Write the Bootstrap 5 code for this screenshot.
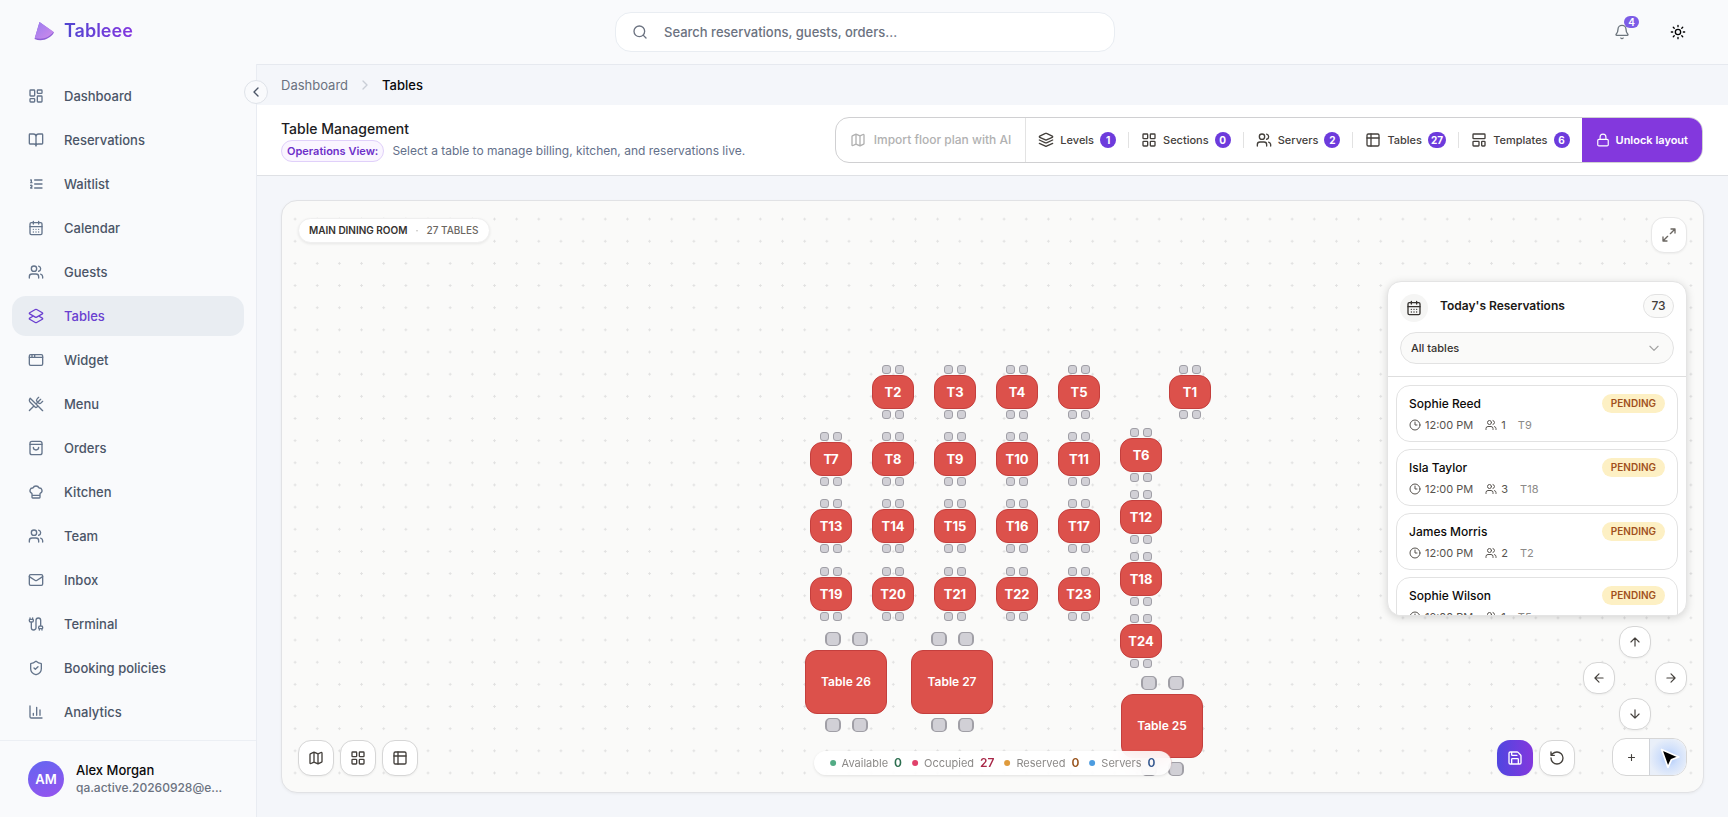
<!DOCTYPE html>
<html lang="en">
<head>
<meta charset="utf-8">
<meta name="viewport" content="width=device-width, initial-scale=1">
<title>Tableee – Tables</title>
<link href="https://cdn.jsdelivr.net/npm/bootstrap@5.3.0/dist/css/bootstrap.min.css" rel="stylesheet">
<style>
:root { --brand: #6d3bdc; --ink: #1c1c22; --slate: #4b5567; --muted: #6b7280; --line: #e3e6ea; --stone: #57534e; }
body { font-family: Inter, "Liberation Sans", sans-serif; font-size: 13px; line-height: 20px; color: var(--ink); background: #f9fafc; }
svg { fill: none; stroke: currentColor; stroke-width: 2; stroke-linecap: round; stroke-linejoin: round; flex-shrink: 0; display: block; }
.i12 { width: 12px; height: 12px; } .i14 { width: 14px; height: 14px; } .i16 { width: 16px; height: 16px; }

.topbar { height: 64px; padding: 0 30px 0 32px; }
.brand { font-size: 18px; line-height: 28px; font-weight: 600; color: transparent; background: linear-gradient(90deg, #5046d0, #8437df); background-clip: text; -webkit-background-clip: text; }
.brand:hover { color: transparent; }
.side-slot { flex: 1 1 0; }
.search { flex: 0 1 500px; }
.search svg { position: absolute; left: 17px; top: 12px; color: var(--muted); }
.search .form-control { height: 40px; border-radius: 16px; border: 1px solid #e9edf2; background: #fff; padding: 0 16px 0 48px; font-size: 13px; font-weight: 500; }
.search .form-control::placeholder { color: #6b7280; opacity: 1; }
.tool { width: 40px; height: 40px; padding: 0; border: 0; background: none; display: flex; align-items: center; justify-content: center; position: relative; }
.tool .alert-count { position: absolute; left: 22px; top: 4px; min-width: 15px; height: 12px; border-radius: 6px; background: #7c5ce6; color: #fff; font-size: 10px; line-height: 12px; font-weight: 600; }

.sidebar { width: 257px; border-right: 1px solid #e9ecf2; background: #f9fafc; flex-shrink: 0; position: relative; }
.side-nav { padding: 12px 12px 0; gap: 4px; flex: 1 1 0; min-height: 0; overflow: hidden; }
.side-nav .nav-link { height: 40px; flex-shrink: 0; padding: 0 16px; border-radius: 14px; gap: 20px; color: var(--slate); font-weight: 500; display: flex; align-items: center; }
.side-nav .nav-link svg { color: #64748b; }
.side-nav .nav-link.active { background: #e9edf2; color: #6a3fd0; }
.side-nav .nav-link.active svg { color: #6a3fd0; }
.collapse-btn { position: absolute; right: -12px; top: 16px; width: 24px; height: 24px; padding: 0; border-radius: 50%; border: 1px solid #dfe3e9; background: #f9fafc; color: var(--slate); display: flex; align-items: center; justify-content: center; z-index: 5; }
.profile { border-top: 1px solid #eceff4; padding: 20px 28px; height: 77px; gap: 12px; }
.avatar { width: 36px; height: 36px; border-radius: 50%; color: #fff; font-weight: 600; background: linear-gradient(160deg, #6366f1, #9753ee); flex-shrink: 0; }
.profile-name { font-weight: 500; line-height: 18px; color: #09090b; }
.profile-mail { font-size: 12px; line-height: 18px; color: var(--muted); font-weight: 500; }

.workspace { background: #f4f6fa; border-top: 1px solid #e6e9ef; min-width: 0; margin-left: -1px; }
.crumbs { height: 40px; padding: 0 25px; gap: 9px; }
.crumbs a { color: var(--muted); text-decoration: none; }
.crumbs strong { font-weight: 500; color: #09090b; }
.crumbs svg { color: #c9ced6; }
.page-head { background: #fff; border-bottom: 1px solid #dfe1e5; padding: 12px 25px; min-height: 71px; }
.page-title { font-size: 14px; line-height: 22px; font-weight: 500; margin: 0; }
.mode-pill { font-size: 11px; line-height: 20px; font-weight: 600; color: #6d2fc9; background: #faf5ff; border: 1px solid #e0d0fa; border-radius: 11px; padding: 0 5px; }
.mode-text { font-size: 12px; color: #64708a; }

.actions { border: 1px solid #d0d0d2; border-radius: 14px; height: 46px; background: #fff; overflow: hidden; }
.actions button { border: 0; background: none; font-size: 11px; font-weight: 500; color: #44403c; padding: 0 12px; display: flex; align-items: center; gap: 6px; white-space: nowrap; }
.actions .import { color: #b1b1b1; font-size: 12px; padding: 0 14px; gap: 8px; border-right: 1px solid #e3e3e3; }
.actions .tally { min-width: 16px; height: 16px; padding: 0 3px; border-radius: 8px; background: var(--brand); color: #fff; font-size: 10px; line-height: 16px; font-weight: 700; text-align: center; }
.actions .rule { width: 1px; height: 16px; background: #e2e2e2; }
.actions .unlock { background: #8338dd; color: #fff; font-weight: 600; padding: 0 14px; }

.floor-wrap { padding: 24px 24px 24px 25px; min-height: 0; }
.floor { --zoom: .9236; border: 1px solid #e1e2e5; border-radius: 16px; overflow: hidden; position: relative; background-color: #fafaf9; background-image: radial-gradient(circle, #e1e1e1 1px, transparent 1px); background-size: calc(24px * var(--zoom)) calc(24px * var(--zoom)); background-position: 2px 7px; box-shadow: 0 1px 3px #0000000d; }
.over { position: absolute; z-index: 3; }
.room-pill { left: 16px; top: 17px; height: 25px; border: 1px solid #efefef; border-radius: 13px; background: #fff; padding: 0 10px; font-size: 10px; line-height: 23px; font-weight: 500; color: #6b6762; gap: 8px; box-shadow: 0 1px 3px #00000014; }
.room-pill b { font-weight: 600; color: #35322f; }
.sq { width: 36px; height: 36px; padding: 0; border-radius: 13px; border: 1px solid #d6d6d6; background: #fff; color: #44403c; display: flex; align-items: center; justify-content: center; box-shadow: 0 1px 2px #0000000d; }
.sq.light { border-color: #e8e8e8; color: #6b6762; }
.sq.save { border: 0; color: #fff; background: linear-gradient(90deg, #5046e0, #8338dd); }
.top-right { right: 16px; top: 16px; } .bottom-left { left: 16px; bottom: 16px; } .bottom-right { right: 16px; bottom: 16px; }
.pad { right: 16px; bottom: 62px; display: grid; grid-template-columns: repeat(3, 32px); grid-auto-rows: 32px; gap: 4px; }
.pad .sq { width: 32px; height: 32px; border-radius: 14px; }
.pad .up, .pad .down { grid-column: 2; } .pad .west { grid-column: 1; } .pad .east { grid-column: 3; }
.zoom-box { height: 38px; width: 75px; border: 1px solid #d6d6d6; border-radius: 14px; background: #fff; overflow: hidden; margin-left: 31px; }
.zoom-box button { border: 0; background: none; padding: 0; color: #44403c; display: flex; align-items: center; justify-content: center; flex: 1 1 0; }
.zoom-box .less { border-left: 1px solid #d0d3d8; background: radial-gradient(circle at 52% 52%, #a9c6fa 0, #cfdffb 35%, #e9eff9 75%); }
.pointer { stroke: #fff; fill: #000; width: 23px; height: 23px; }

.legend-bar { left: 50%; bottom: 17px; transform: translateX(-50%); height: 24px; border-radius: 12px; padding: 0 16px; gap: 10px; background: #ffffffe0; backdrop-filter: blur(8px); box-shadow: 0 1px 3px #0000001a; font-size: 11px; color: #8c8a88; white-space: nowrap; }
.legend-bar i { width: 6px; height: 6px; border-radius: 50%; background: currentColor; }
.legend-bar b { font-size: 12px; font-weight: 600; }

.node { position: absolute; transform: translate(-50%, -50%); display: grid; grid-template-columns: auto auto; justify-content: center; column-gap: 4px; row-gap: 1px; z-index: 1; }
.node button { grid-column: 1 / 3; width: 42px; height: 34px; border-radius: 12px; border: 1px solid #c43f3d; background: #dc514b; color: #fff; font-size: 13px; font-weight: 700; padding: 0; }
.seat { width: 9px; height: 9px; border-radius: 3px; background: #d1d0d6; border: 1px solid #a09fa6; }
.seat.r { justify-self: start; } .seat.l { justify-self: end; }
.node.big { column-gap: 11px; row-gap: 4px; }
.node.big button { width: 82px; height: 64px; font-size: 12px; font-weight: 600; }
.node.big .seat { width: 16px; height: 14px; border-radius: 5px; border-width: 1px 2px; }

.bookings { right: 16px; top: 80px; width: 300px; height: 335px; border: 1px solid #e4e4e4; border-radius: 14px; background: #fff; overflow: hidden; box-shadow: 0 2px 8px #00000026; }
.bookings-head { padding: 12px 12px 12px; border-bottom: 1px solid #dedede; }
.cal-dot { width: 28px; height: 28px; border-radius: 50%; background: #f5f5f4; color: #35322f; }
.bookings h2 { font-size: 12px; line-height: 24px; font-weight: 600; margin: 0; color: #1c1917; }
.total { min-width: 31px; height: 24px; border: 1px solid #e2e2e2; border-radius: 12px; background: #fafaf9; font-size: 12px; line-height: 22px; font-weight: 500; color: #44403c; text-align: center; }
.bookings .form-select { height: 32px; border-radius: 16px; border: 1px solid #e2e2e2; background-color: #fafaf9; background-image: url("data:image/svg+xml,%3csvg xmlns='http://www.w3.org/2000/svg' viewBox='0 0 24 24' fill='none' stroke='%23a3a3a3' stroke-width='2' stroke-linecap='round' stroke-linejoin='round'%3e%3cpath d='m5 9 7 7 7-7'/%3e%3c/svg%3e"); background-size: 14px; background-position: right 12px center; font-size: 11px; line-height: 18px; font-weight: 500; color: #35322f; padding: 0 28px 0 10px; margin-top: 10px; }
.entry { border: 1px solid #e2e2e2; border-radius: 14px; height: 57px; padding: 8px 12px; margin-bottom: 7px; background: #fff; flex-shrink: 0; }
.entries { padding: 8px 8px 0; }
.entry-name { font-size: 12px; line-height: 19px; font-weight: 500; color: #0c0a09; }
.pend { font-size: 10px; line-height: 19px; font-weight: 600; color: #a1501c; background: #fdf0c4; border-radius: 10px; padding: 0 9px; }
.entry-meta { font-size: 11px; line-height: 16px; color: var(--stone); gap: 12px; margin-top: 4px; }
.entry-meta .seatref { color: #8c8a88; }
</style>
</head>
<body>
<svg class="d-none" aria-hidden="true">
  <symbol id="dash" viewBox="0 0 24 24"><rect width="7" height="9" x="3" y="3" rx="1"/><rect width="7" height="5" x="14" y="3" rx="1"/><rect width="7" height="9" x="14" y="12" rx="1"/><rect width="7" height="5" x="3" y="16" rx="1"/></symbol>
  <symbol id="book" viewBox="0 0 24 24"><path d="M12 7v14M3 18a1 1 0 0 1-1-1V4a1 1 0 0 1 1-1h5a4 4 0 0 1 4 4 4 4 0 0 1 4-4h5a1 1 0 0 1 1 1v13a1 1 0 0 1-1 1h-6a3 3 0 0 0-3 3 3 3 0 0 0-3-3z"/></symbol>
  <symbol id="wait" viewBox="0 0 24 24"><path d="M10 12h11M10 18h11M10 6h11M4 10h2M4 6h1v4M6 18H4c0-1 2-2 2-3s-1-1.500-2-1"/></symbol>
  <symbol id="cal" viewBox="0 0 24 24"><path d="M8 2v4M16 2v4M3 10h18M8 14h.01M12 14h.01M16 14h.01M8 18h.01M12 18h.01M16 18h.01"/><rect width="18" height="18" x="3" y="4" rx="2"/></symbol>
  <symbol id="users" viewBox="0 0 24 24"><path d="M16 21v-2a4 4 0 0 0-4-4H6a4 4 0 0 0-4 4v2"/><circle cx="9" cy="7" r="4"/><path d="M22 21v-2a4 4 0 0 0-3-3.870M16 3.130a4 4 0 0 1 0 7.750"/></symbol>
  <symbol id="layers2" viewBox="0 0 24 24"><path d="m16.020 12 5.480 3.130a1 1 0 0 1 0 1.740L13 21.740a2 2 0 0 1-2 0l-8.500-4.870a1 1 0 0 1 0-1.740L7.980 12M13 13.740a2 2 0 0 1-2 0L2.500 8.870a1 1 0 0 1 0-1.740L11 2.260a2 2 0 0 1 2 0l8.500 4.870a1 1 0 0 1 0 1.740Z"/></symbol>
  <symbol id="window" viewBox="0 0 24 24"><rect x="2" y="4" width="20" height="16" rx="2"/><path d="M10 4v4M2 8h20M6 4v4"/></symbol>
  <symbol id="cutlery" viewBox="0 0 24 24"><path d="m16 2-2.300 2.300a3 3 0 0 0 0 4.200l1.800 1.800a3 3 0 0 0 4.200 0L22 8M15 15 3.300 3.300a4.200 4.200 0 0 0 0 6l7.300 7.300c.7.7 2 .7 2.800 0L15 15Zm0 0 7 7M2.100 21.800l6.400-6.300M19 5l-7 7"/></symbol>
  <symbol id="bag" viewBox="0 0 24 24"><rect x="3" y="2" width="18" height="20" rx="3"/><path d="M3 6.500h18M16 11a4 4 0 0 1-8 0"/></symbol>
  <symbol id="chef" viewBox="0 0 24 24"><path d="M17 21a1 1 0 0 0 1-1v-5.350c0-.457.316-.844.727-1.041a4 4 0 0 0-2.134-7.589 5 5 0 0 0-9.186 0 4 4 0 0 0-2.134 7.588c.411.198.727.585.727 1.041V20a1 1 0 0 0 1 1ZM6 17h12"/></symbol>
  <symbol id="mail" viewBox="0 0 24 24"><rect width="20" height="16" x="2" y="4" rx="2"/><path d="m22 7-8.970 5.700a1.940 1.940 0 0 1-2.060 0L2 7"/></symbol>
  <symbol id="cable" viewBox="0 0 24 24"><path d="M17 21v-2a1 1 0 0 1-1-1v-1a2 2 0 0 1 2-2h2a2 2 0 0 1 2 2v1a1 1 0 0 1-1 1M19 15V6.500a1 1 0 0 0-7 0v11a1 1 0 0 1-7 0V9M21 21v-2h-4M3 5h4V3M7 5a1 1 0 0 1 1 1v1a2 2 0 0 1-2 2H4a2 2 0 0 1-2-2V6a1 1 0 0 1 1-1V3"/></symbol>
  <symbol id="shield" viewBox="0 0 24 24"><path d="M20 13c0 5-3.500 7.500-7.660 8.950a1 1 0 0 1-.67-.010C7.500 20.500 4 18 4 13V6a1 1 0 0 1 1-1c2 0 4.500-1.200 6.240-2.720a1.170 1.170 0 0 1 1.520 0C14.510 3.810 17 5 19 5a1 1 0 0 1 1 1zM9 12l2 2 4-4"/></symbol>
  <symbol id="chart" viewBox="0 0 24 24"><path d="M3 3v16a2 2 0 0 0 2 2h16M8 17v-3M13 17V5M18 17V9"/></symbol>
  <symbol id="search" viewBox="0 0 24 24"><circle cx="11" cy="11" r="8"/><path d="m21 21-4.300-4.300"/></symbol>
  <symbol id="bell" viewBox="0 0 24 24"><path d="M10.268 21a2 2 0 0 0 3.464 0M3.262 15.326A1 1 0 0 0 4 17h16a1 1 0 0 0 .740-1.673C19.410 13.956 18 12.499 18 8A6 6 0 0 0 6 8c0 4.499-1.411 5.956-2.738 7.326"/></symbol>
  <symbol id="sun" viewBox="0 0 24 24"><circle cx="12" cy="12" r="4"/><path d="M12 2v2M12 20v2M4.930 4.930l1.410 1.410M17.660 17.660l1.410 1.410M2 12h2M20 12h2M6.340 17.660l-1.410 1.410M19.070 4.930l-1.410 1.410"/></symbol>
  <symbol id="left" viewBox="0 0 24 24"><path d="m15 18-6-6 6-6"/></symbol>
  <symbol id="right" viewBox="0 0 24 24"><path d="m9 18 6-6-6-6"/></symbol>
  <symbol id="map" viewBox="0 0 24 24"><path d="M14.106 5.553a2 2 0 0 0 1.788 0l3.659-1.830A1 1 0 0 1 21 4.619v12.764a1 1 0 0 1-.553.894l-4.553 2.277a2 2 0 0 1-1.788 0l-4.212-2.106a2 2 0 0 0-1.788 0l-3.659 1.830A1 1 0 0 1 3 19.381V6.618a1 1 0 0 1 .553-.894l4.553-2.277a2 2 0 0 1 1.788 0zM15 5.764v15M9 3.236v15"/></symbol>
  <symbol id="layers" viewBox="0 0 24 24"><path d="M12.830 2.180a2 2 0 0 0-1.660 0L2.600 6.080a1 1 0 0 0 0 1.830l8.580 3.910a2 2 0 0 0 1.660 0l8.580-3.900a1 1 0 0 0 0-1.830zM22 12l-9.170 4.160a2 2 0 0 1-1.660 0L2 12M22 17l-9.170 4.160a2 2 0 0 1-1.660 0L2 17"/></symbol>
  <symbol id="grid" viewBox="0 0 24 24"><rect width="7" height="7" x="3" y="3" rx="1"/><rect width="7" height="7" x="14" y="3" rx="1"/><rect width="7" height="7" x="14" y="14" rx="1"/><rect width="7" height="7" x="3" y="14" rx="1"/></symbol>
  <symbol id="table" viewBox="0 0 24 24"><rect width="18" height="18" x="3" y="3" rx="2"/><path d="M3 9h18M9 3v18"/></symbol>
  <symbol id="template" viewBox="0 0 24 24"><rect width="18" height="7" x="3" y="3" rx="1"/><rect width="9" height="7" x="3" y="14" rx="1"/><rect width="5" height="7" x="16" y="14" rx="1"/></symbol>
  <symbol id="lock" viewBox="0 0 24 24"><rect width="18" height="11" x="3" y="11" rx="2"/><path d="M7 11V7a5 5 0 0 1 10 0v4"/></symbol>
  <symbol id="expand" viewBox="0 0 24 24"><path d="M15 3h6v6M21 3l-7 7M3 21l7-7M9 21H3v-6"/></symbol>
  <symbol id="clock" viewBox="0 0 24 24"><circle cx="12" cy="12" r="10"/><path d="M12 6v6h4"/></symbol>
  <symbol id="arrow" viewBox="0 0 24 24"><path d="m5 12 7-7 7 7M12 19V5"/></symbol>
  <symbol id="save" viewBox="0 0 24 24"><path d="M15.200 3a2 2 0 0 1 1.400.6l3.800 3.800a2 2 0 0 1 .6 1.400V19a2 2 0 0 1-2 2H5a2 2 0 0 1-2-2V5a2 2 0 0 1 2-2zM17 21v-7a1 1 0 0 0-1-1H8a1 1 0 0 0-1 1v7M7 3v4a1 1 0 0 0 1 1h7"/></symbol>
  <symbol id="reset" viewBox="0 0 24 24"><path d="M3 12a9 9 0 1 0 9-9 9.750 9.750 0 0 0-6.740 2.740L3 8M3 3v5h5"/></symbol>
  <symbol id="plus" viewBox="0 0 24 24"><path d="M4 12h16M12 4v16" stroke-width="3"/></symbol>
</svg>

<div class="d-flex flex-column vh-100">
  <header class="topbar d-flex align-items-center">
    <div class="side-slot"><a class="d-inline-flex align-items-center gap-2 text-decoration-none" href="#">
      <svg width="24" height="24" viewBox="0 0 24 24" stroke="none"><defs><linearGradient id="lg" x2="1" y2="1"><stop stop-color="#9a7cf0"/><stop offset="1" stop-color="#cf8be9"/></linearGradient></defs><path d="M7.500 3 22 13.500C18 20 10 23 2.500 20Z" fill="#8d5fd6" stroke="none"/><path d="M7.500 3 21.500 12.800C17 19 10 21 2.800 19Z" fill="url(#lg)" stroke="none"/></svg>
      <span class="brand">Tableee</span></a></div>
    <div class="search position-relative">
      <svg class="i16"><use href="#search"/></svg>
      <input class="form-control shadow-none" type="search" aria-label="Search" placeholder="Search reservations, guests, orders...">
    </div>
    <div class="side-slot d-flex justify-content-end gap-3">
      <button class="tool text-secondary" type="button" aria-label="Notifications"><svg class="i16"><use href="#bell"/></svg><span class="alert-count">4</span></button>
      <button class="tool" type="button" aria-label="Theme"><svg class="i16"><use href="#sun"/></svg></button>
    </div>
  </header>

  <div class="d-flex flex-grow-1 overflow-hidden">
    <aside class="sidebar d-flex flex-column">
      <button class="collapse-btn" type="button" aria-label="Collapse sidebar"><svg class="i16"><use href="#left"/></svg></button>
      <nav class="side-nav nav flex-column flex-nowrap" id="sideNav"></nav>
      <div class="profile d-flex align-items-center">
        <div class="avatar d-flex align-items-center justify-content-center">AM</div>
        <div>
          <div class="profile-name">Alex Morgan</div>
          <div class="profile-mail">qa.active.20260928@e...</div>
        </div>
      </div>
    </aside>

    <main class="workspace d-flex flex-column flex-grow-1">
      <nav class="crumbs d-flex align-items-center" aria-label="breadcrumb">
        <a href="#">Dashboard</a><svg class="i16"><use href="#right"/></svg><strong>Tables</strong>
      </nav>
      <section class="page-head d-flex align-items-center justify-content-between">
        <div>
          <h1 class="page-title">Table Management</h1>
          <div class="d-flex align-items-center gap-2"><span class="mode-pill">Operations View:</span><span class="mode-text">Select a table to manage billing, kitchen, and reservations live.</span></div>
        </div>
        <div class="actions d-flex align-items-stretch" id="actions">
          <button class="import" type="button" disabled><svg class="i16"><use href="#map"/></svg>Import floor plan with AI</button>
          <button class="unlock" type="button"><svg class="i14"><use href="#lock"/></svg>Unlock layout</button>
        </div>
      </section>

      <div class="floor-wrap flex-grow-1 d-flex">
        <div class="floor flex-grow-1" id="floor">
          <div class="over room-pill d-flex"><b>MAIN DINING ROOM</b><span class="opacity-50">·</span><span>27 TABLES</span></div>
          <div class="over top-right"><button class="sq light" type="button" aria-label="Full screen"><svg class="i16"><use href="#expand"/></svg></button></div>

          <section class="over bookings d-flex flex-column">
            <div class="bookings-head">
              <div class="d-flex align-items-start">
                <span class="cal-dot d-flex align-items-center justify-content-center me-2"><svg class="i16"><use href="#cal"/></svg></span>
                <h2 class="flex-grow-1 ms-1">Today's Reservations</h2>
                <span class="total">73</span>
              </div>
              <select class="form-select shadow-none" aria-label="Filter by table"><option>All tables</option></select>
            </div>
            <div class="entries d-flex flex-column" id="entries"></div>
          </section>

          <div class="over pad">
            <button class="sq up" type="button" aria-label="Pan up"><svg class="i14"><use href="#arrow"/></svg></button>
            <button class="sq west" type="button" aria-label="Pan left"><svg class="i14"><use href="#arrow" transform="rotate(-90 7 7)"/></svg></button>
            <button class="sq east" type="button" aria-label="Pan right"><svg class="i14"><use href="#arrow" transform="rotate(90 7 7)"/></svg></button>
            <button class="sq down" type="button" aria-label="Pan down"><svg class="i14"><use href="#arrow" transform="rotate(180 7 7)"/></svg></button>
          </div>

          <div class="over bottom-left d-flex" style="gap:6px">
            <button class="sq" type="button" aria-label="Floor map"><svg class="i16"><use href="#map"/></svg></button>
            <button class="sq" type="button" aria-label="Sections"><svg class="i16"><use href="#grid"/></svg></button>
            <button class="sq" type="button" aria-label="Tables"><svg class="i16"><use href="#table"/></svg></button>
          </div>

          <div class="over legend-bar d-flex align-items-center" id="legend"></div>

          <div class="over bottom-right d-flex align-items-end" style="gap:6px">
            <button class="sq save" type="button" aria-label="Save"><svg class="i16"><use href="#save"/></svg></button>
            <button class="sq" type="button" aria-label="Reset"><svg class="i16"><use href="#reset"/></svg></button>
            <div class="zoom-box d-flex">
              <button type="button" aria-label="Zoom in"><svg width="9" height="9"><use href="#plus"/></svg></button>
              <button class="less" type="button" aria-label="Zoom out"><svg class="pointer" viewBox="0 0 20 20"><path d="M4 3 19 9.500 12.500 12 9.500 18.500Z" stroke-width="1.500"/></svg></button>
            </div>
          </div>
        </div>
      </div>
    </main>
  </div>
</div>

<script src="https://cdn.jsdelivr.net/npm/bootstrap@5.3.0/dist/js/bootstrap.bundle.min.js"></script>
<script>
const icon = (id, size) => `<svg class="${size}"><use href="#${id}"/></svg>`;

sideNav.innerHTML = [["dash","Dashboard"],["book","Reservations"],["wait","Waitlist"],["cal","Calendar"],["users","Guests"],["layers2","Tables"],["window","Widget"],["cutlery","Menu"],["bag","Orders"],["chef","Kitchen"],["users","Team"],["mail","Inbox"],["cable","Terminal"],["shield","Booking policies"],["chart","Analytics"]]
  .map(([i, t]) => `<a class="nav-link${t === "Tables" ? " active" : ""}" href="#">${icon(i, "i16")}${t}</a>`).join("");

document.querySelector("#actions .import").insertAdjacentHTML("afterend",
  [["layers","Levels",1],["grid","Sections",0],["users","Servers",2],["table","Tables",27],["template","Templates",6]]
  .map(([i, t, n]) => `<button type="button">${icon(i, "i16")}<span>${t}</span><span class="tally">${n}</span></button>`)
  .join('<span class="rule align-self-center"></span>'));

entries.innerHTML = [["Sophie Reed",1,"T9"],["Isla Taylor",3,"T18"],["James Morris",2,"T2"],["Sophie Wilson",1,"T5"]]
  .map(([n, p, t]) => `<div class="entry"><div class="d-flex justify-content-between"><span class="entry-name">${n}</span><span class="pend">PENDING</span></div>
    <div class="entry-meta d-flex"><span class="d-flex align-items-center gap-1">${icon("clock","i12")}12:00 PM</span><span class="d-flex align-items-center gap-1">${icon("users","i12")}${p}</span><span class="seatref">${t}</span></div></div>`).join("");

legend.innerHTML = [["Available",0,"#52ab84","#2c6e4f"],["Occupied",27,"#e0416a","#a82848"],["Reserved",0,"#df9b3d","#99551f"],["Servers",0,"#4c9ce0","#35588f"]]
  .map(([t, n, dot, num]) => `<span class="d-flex align-items-center" style="gap:6px"><i style="color:${dot}"></i>${t}<b style="color:${num}">${n}</b></span>`).join("");

/* centre of every table on the floor canvas */
const tables = [["T2",611,191],["T3",673,191],["T4",735,191],["T5",797,191],["T1",908,191],
  ["T7",549,258],["T8",611,258],["T9",673,258],["T10",735,258],["T11",797,258],["T6",859,254],
  ["T13",549,325],["T14",611,325],["T15",673,325],["T16",735,325],["T17",797,325],["T12",859,316],
  ["T19",549,393],["T20",611,393],["T21",673,393],["T22",735,393],["T23",797,393],["T18",859,378],["T24",859,440],
  ["Table 26",564,481],["Table 27",670,481],["Table 25",880,525]];
floor.insertAdjacentHTML("afterbegin", tables.map(([t, x, y]) =>
  `<div class="node${t.length > 3 ? " big" : ""}" style="left:${x}px;top:${y}px"><span class="seat l"></span><span class="seat r"></span><button type="button">${t}</button><span class="seat l"></span><span class="seat r"></span></div>`).join(""));
</script>
</body>
</html>
